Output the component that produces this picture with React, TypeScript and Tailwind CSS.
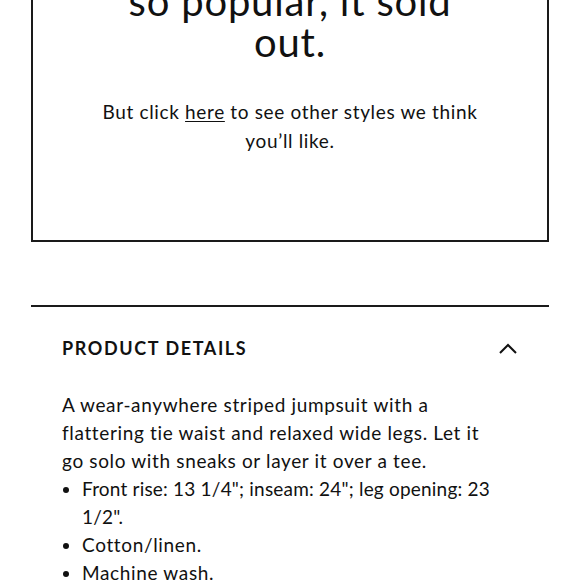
import React from 'react';

function ChevronUp() {
  return (
    <svg width="18" height="11" viewBox="0 0 18 11" fill="none" className="mr-[1px]">
      <path d="M1 10L9 2l8 8" stroke="#111" strokeWidth="2" />
    </svg>
  );
}

const bullets = [
  <span className="tracking-[0.2px]">
    Front rise: 13 1/4"; inseam: 24"; leg opening: 23
    <br />
    1/2".
  </span>,
  <>Cotton/linen.</>,
  <>Machine wash.</>,
];

export default function App() {
  return (
    <div
      className="w-[580px] h-[580px] overflow-hidden bg-white text-[#111]"
      style={{ fontFamily: 'Lato, "Noto Sans", sans-serif' }}
    >
      <div className="mx-[31px] -mt-[68px] border-2 border-[#1a1a1a] pb-[85px]">
        <h2 className="text-center text-[40px] leading-[41px] tracking-[0.8px] pt-[6px]">
          This style was
          <br />
          so popular, it sold
          <br />
          out.
        </h2>
        <p className="mt-[34px] text-center text-[19px] leading-[29px] tracking-[0.65px]">
          But click <a className="underline underline-offset-2">here</a> to see other styles we think
          <br />
          you’ll like.
        </p>
      </div>

      <div className="mx-[31px] mt-[63px] border-t-2 border-[#1a1a1a]">
        <div className="flex items-center justify-between px-[31px] pt-[28px] pb-[29px]">
          <h3 className="text-[18px] font-bold tracking-[1.6px]">PRODUCT DETAILS</h3>
          <ChevronUp />
        </div>
        <div className="px-[31px] text-[19px] leading-[28px] tracking-[0.65px]">
          <p>
            A wear-anywhere striped jumpsuit with a
            <br />
            flattering tie waist and relaxed wide legs. Let it
            <br />
            go solo with sneaks or layer it over a tee.
          </p>
          <ul className="list-disc pl-[20px]">
            {bullets.map((b, i) => (
              <li key={i}>{b}</li>
            ))}
          </ul>
        </div>
      </div>
    </div>
  );
}
